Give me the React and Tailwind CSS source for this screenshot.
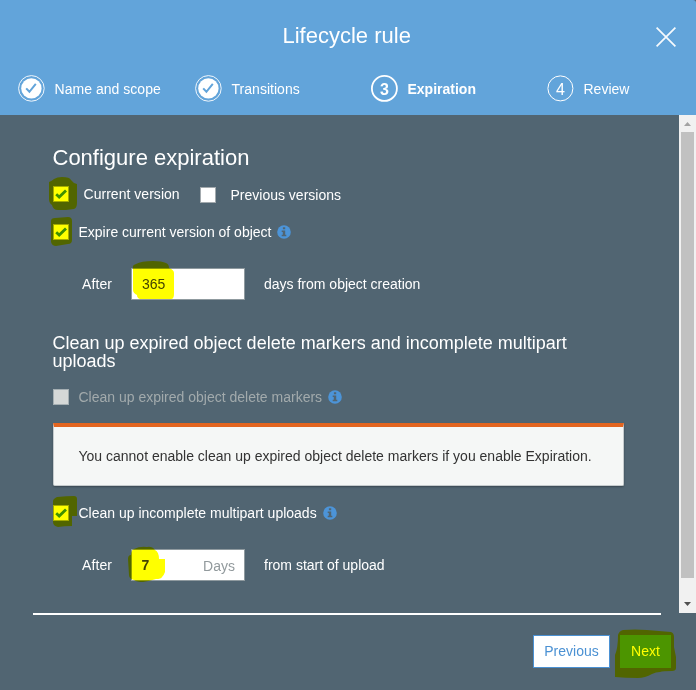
import React from 'react';

function DoneIcon() {
  return (
    <svg className="w-[28px] h-[28px] shrink-0" viewBox="0 0 28 28" fill="none">
      <circle cx="14.4" cy="14.4" r="12.8" stroke="#fff" strokeOpacity="0.9" strokeWidth="1" />
      <circle cx="14.4" cy="14.4" r="10.2" fill="#fff" />
      <path d="M9.2 14.4l3.2 3.4 6.4-8" stroke="#62a4da" strokeWidth="2" />
    </svg>
  );
}

function NumberIcon({ n, active }) {
  return (
    <svg className="w-[28px] h-[28px] shrink-0" viewBox="0 0 28 28" fill="none">
      <circle cx="14.4" cy="14.4" r="12.5" stroke="#fff" strokeWidth={active ? 1.8 : 1} />
      <text x="14.4" y="20.6" textAnchor="middle" fill="#fff" fontSize="16" fontWeight={active ? 700 : 400}>
        {n}
      </text>
    </svg>
  );
}

function Info() {
  return (
    <svg className="w-[14px] h-[14px] shrink-0" viewBox="0 0 14 14">
      <circle cx="7" cy="7" r="6.8" fill="#4c94d8" />
      <path d="M5.9 2.2h2.3v2H5.9zM4.7 5.4h3.5v4.4h1.1v1.5H4.7V9.8h1.1V6.9H4.7z" fill="#516572" />
    </svg>
  );
}

function Checkbox({ checked, disabled }) {
  return (
    <span
      className={
        'flex w-4 h-4 shrink-0 border ' +
        (disabled ? 'bg-[#d5d8d7] border-[#a5afb3]' : 'bg-white border-[#a3aaae]')
      }
    >
      {checked && (
        <svg className="w-[14px] h-[14px]" viewBox="0 0 14 14" fill="none">
          <path d="M2.2 7.3l3 2.8L12 3.5" stroke="#3f8f95" strokeWidth="2.8" />
        </svg>
      )}
    </span>
  );
}

function Highlights() {
  return (
    <svg
      className="absolute left-0 top-0 w-[696px] h-[690px] mix-blend-multiply pointer-events-none"
      viewBox="0 0 696 690"
      fill="#ffff00"
    >
      <path d="M49 182q3-1 5-3 3-2 8-2 8 0 9 3 2 3 6 4v19q0 5-3 6l-8 1H58q-5 0-6-5-3-2-3-6z" />
      <path d="M51 221q0-3 4-3l13-1q4 0 4 4v19q0 4-4 4l-12 2q-4 0-5-4z" />
      <path d="M133 268q-1-3 3-4 5-3 17-3 9 0 13 2 3 1 3 5 5 2 5 5v21q0 5-3 5h-31q-3-1-3-4-4-2-4-5z" />
      <path d="M53 501q0-2 4-4 10-1 17-1 3 0 3 3v17h-5v10q-8 0-14 1-5-1-5-5z" />
      <path d="M128 559q0-4 3-4 0-5 3-6 6-3 13-2 5-1 8 3 4 2 4 9h6v13q-1 3-3 5-1 2-6 2-6 2-13 3-6 0-9-2-5-1-5-5z" />
      <path d="M618 635q1-4 5-5 12-1 24 0l24 2q3 1 3 5l0 10 2 10v11q0 3-4 3-9 0-12 1-4 0-8 2-7 4-14 4-13 0-23-1V655q3-7 3-20z" />
    </svg>
  );
}

export default function App() {
  return (
    <div className="relative isolate flex flex-col w-[696px] h-[690px] overflow-hidden bg-[#516572] text-white text-[14px] leading-[20px] font-['Liberation_Sans',Arial,sans-serif]">
      <header className="h-[115px] shrink-0 bg-[#62a4da] rounded-tr-[3px]">
        <div className="flex h-[74px] pl-[282.5px] pr-[20px] justify-between">
          <h1 className="text-[22px] leading-[26px] mt-[23px] whitespace-nowrap">Lifecycle rule</h1>
          <svg className="w-[20px] h-[20px] mt-[27px]" viewBox="0 0 20 20" fill="none">
            <path d="M.6.6l18.8 18.8M19.4.6L.6 19.4" stroke="#fff" strokeOpacity="0.95" strokeWidth="1.7" />
          </svg>
        </div>
        <nav className="flex pl-[17px] h-[28px]">
          <div className="flex items-center w-[177px] gap-[9.5px]">
            <DoneIcon /><span className="mt-[2px] tracking-[0.03px]">Name and scope</span>
          </div>
          <div className="flex items-center w-[176px] gap-[9.5px]">
            <DoneIcon /><span className="mt-[2px] tracking-[0.03px]">Transitions</span>
          </div>
          <div className="flex items-center w-[176px] gap-[9.5px]">
            <NumberIcon n="3" active /><span className="mt-[2px] font-bold">Expiration</span>
          </div>
          <div className="flex items-center gap-[9.5px]">
            <NumberIcon n="4" /><span className="mt-[2px]">Review</span>
          </div>
        </nav>
      </header>

      <div className="flex h-[498px] shrink-0">
        <main className="w-[679px] pl-[53px]">
          <h2 className="text-[22px] leading-[26px] mt-[30px] -ml-[0.5px]">Configure expiration</h2>
          <div className="flex h-[16px] mt-[15px]">
            <Checkbox checked />
            <span className="ml-[14.5px] w-[116.5px] -mt-[2px] tracking-[0.03px]">Current version</span>
            <div className="flex mt-[1px]">
              <Checkbox />
              <span className="ml-[14.5px] -mt-[2px]">Previous versions</span>
            </div>
          </div>
          <div className="flex items-center h-[16px] mt-[22px]">
            <Checkbox checked />
            <span className="ml-[9.5px] mr-[5.5px]">Expire current version of object</span>
            <Info />
          </div>
          <div className="flex items-center h-[32px] mt-[28px] pl-[29px]">
            <span className="w-[49px] tracking-[0.1px]">After</span>
            <div className="flex items-center w-[114px] h-[32px] bg-white border border-[#8f9a9f] pl-[10px] text-[#444]">365</div>
            <span className="ml-[19px]">days from object creation</span>
          </div>
          <h3 className="text-[18px] leading-[18px] mt-[34px] w-[560px] -ml-[0.5px]">
            Clean up expired object delete markers and incomplete multipart uploads
          </h3>
          <div className="flex items-center h-[16px] mt-[19px] text-[#a2aaac]">
            <Checkbox disabled />
            <span className="ml-[9.5px] mr-[5.5px]">Clean up expired object delete markers</span>
            <Info />
          </div>
          <div className="flex items-center w-[571px] h-[63px] mt-[18px] pl-[24.5px] bg-[#f5f7f6] text-[#333] border-t-4 border-t-[#e36520] border-x border-b border-[#c5cbcd] rounded-b-[2px] shadow-[0_1px_2px_rgba(0,0,0,0.3)]">
            You cannot enable clean up expired object delete markers if you enable Expiration.
          </div>
          <div className="flex items-center h-[16px] mt-[19px]">
            <Checkbox checked />
            <span className="ml-[9.5px] mr-[6px]">Clean up incomplete multipart uploads</span>
            <Info />
          </div>
          <div className="flex items-center h-[32px] mt-[28px] pl-[29px]">
            <span className="w-[49px] tracking-[0.1px]">After</span>
            <div className="flex items-center justify-between w-[114px] h-[32px] bg-white border border-[#8f9a9f] pl-[9.5px] pr-[9px] text-[#444]">
              <b>7</b>
              <span className="mt-[2px] text-[#929a9d]">Days</span>
            </div>
            <span className="ml-[19px]">from start of upload</span>
          </div>
        </main>
        <div className="flex flex-col items-center w-[17px] bg-[#f1f1f1]">
          <svg className="w-[17px] h-[17px]" viewBox="0 0 17 17"><path d="M5 11l3.5-4 3.5 4z" fill="#a3a3a3" /></svg>
          <div className="w-[13px] h-[446px] bg-[#c1c1c1]" />
          <svg className="w-[17px] h-[17px] mt-auto" viewBox="0 0 17 17"><path d="M5 6l3.5 4L12 6z" fill="#505050" /></svg>
        </div>
      </div>

      <footer>
        <div className="ml-[33px] w-[628px] h-[2px] bg-white" />
        <div className="flex justify-end gap-[10px] mt-[20px] pr-[25px]">
          <button className="w-[77px] h-[33px] pb-[2px] bg-white border border-[#4b91d3] text-[#4b91d3]">Previous</button>
          <button className="w-[51px] h-[33px] pb-[2px] bg-[#4c95d8] text-white">Next</button>
        </div>
      </footer>
      <Highlights />
    </div>
  );
}
